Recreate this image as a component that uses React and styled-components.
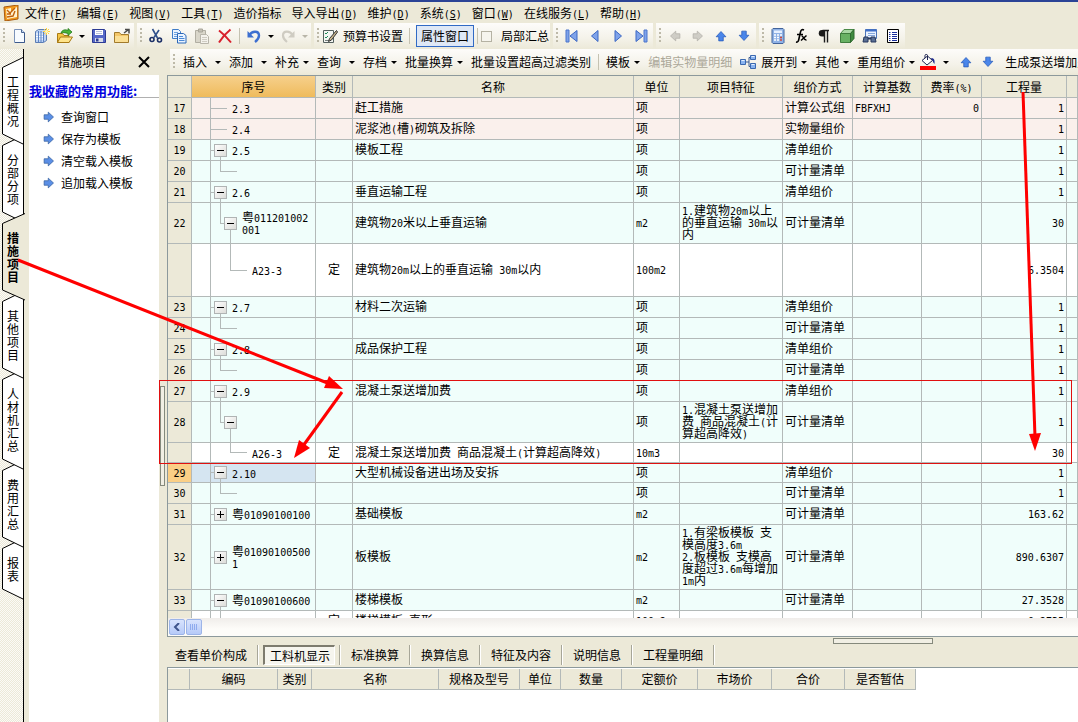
import React from "react";
import styled, { createGlobalStyle, css } from "styled-components";

const FACE = "#ece9d8";
const LINE = "#b3b9b8";
const FRAME = "#8c999c";

const GlobalStyle = createGlobalStyle`
  * {
    box-sizing: border-box;
  }

  body {
    margin: 0;
    overflow: hidden;
    background: ${FACE};
    color: #000;
    font: 12px/12px "Noto Sans CJK SC", sans-serif;
  }

  button,
  input {
    margin: 0;
    padding: 0;
    border: 0;
    background: none;
    color: inherit;
    font: inherit;
  }
`;

const Latin = styled.span`
  font-family: "DejaVu Sans Mono", monospace;
  font-size: 10px;
  line-height: 0;
`;

// latin runs take half of a Han character's width
const Txt = ({ children }) => (
  <span>
    {children
      .split(/([\x20-\x7e]+)/)
      .map((part, i) => (i % 2 ? <Latin key={i}>{part}</Latin> : part))}
  </span>
);

/* ---------- icons ---------- */

const Svg = styled.svg`
  display: block;
  flex: none;
`;

const Icon = ({ children }) => (
  <Svg width="16" height="16" viewBox="0 0 16 16" fill="none" aria-hidden="true">
    {children}
  </Svg>
);

const arrowPath = "M1.5 5H7V1.5L14 8l-7 6.5V11H1.5z";

const BlockArrow = ({ turn = 0, fill = "#4a86ea", stroke = "#2458b8" }) => (
  <Icon>
    <path
      d={arrowPath}
      fill={fill}
      stroke={stroke}
      transform={`rotate(${turn} 8 8) translate(2 2) scale(.75)`}
    />
  </Icon>
);

const icons = {
  app: (
    <Svg width="16" height="16" viewBox="0 0 16 16" aria-hidden="true">
      <path d="M1 2l14-2v14L2 16z" fill="#f39a1d" stroke="#a85a10" />
      <path d="M3 4l5-1v4l4-4 2-1v10L4 14z" fill="#fff3d2" />
      <path d="M4 5l3 3 5-5M4 9h4M4 12l6-1 2-5" stroke="#c2620b" strokeWidth="1.4" fill="none" />
    </Svg>
  ),
  page: (
    <Icon>
      <path d="M3.5 1.5h7l3 3v10h-10z" fill="#f7fbff" stroke="#7a92b8" />
      <path d="M10.5 1.5v3h3" fill="#c9dbf5" stroke="#4a6592" />
      <path d="M13.5 5v9.5H4" stroke="#3c5a8c" />
    </Icon>
  ),
  newGrid: (
    <Icon>
      <path d="M1.5 3.5l3-2h8v11l-3 2h-8z" fill="#bcd3f4" stroke="#5b7db4" />
      <path d="M2 6h8M2 8.5h8M2 11h8" stroke="#fff" />
      <path d="M4.5 3v11M7 3v11M9.5 3v11" stroke="#5b82c4" />
      <path d="M12.5 0v7M9 3.5h7M10 1l5 5M15 1l-5 5" stroke="#ffd23c" />
      <circle cx="12.5" cy="3.5" r="1.5" fill="#fff6b8" />
    </Icon>
  ),
  open: (
    <Icon>
      <path d="M.5 14.5v-9h5l1.5 2h5v7z" fill="#f6c544" stroke="#a87a14" />
      <path d="M.5 14.5l3-5.5h12l-3.5 5.5z" fill="#ffe48a" stroke="#a87a14" />
      <path d="M4 5c1-3 4-4 7-2.5V.5L15 4l-4 3.5V5.5C8 4.500 6 4.500 4 5z" fill="#4bb43a" stroke="#247a1a" strokeWidth=".8" />
    </Icon>
  ),
  save: (
    <Icon>
      <path d="M1.5 1.5h12l1 1v12h-13z" fill="#5668c8" stroke="#2c3a94" />
      <path d="M4 2h8v5H4z" fill="#fff" />
      <path d="M5 3.5h6M5 5.5h6" stroke="#b9c0dc" />
      <path d="M4 10h8v4H4z" fill="#d7dbe8" />
      <path d="M5 10.5h2.5v3H5z" fill="#2c3a94" />
    </Icon>
  ),
  folder: (
    <Icon>
      <path d="M.5 14.5V4.5h5l1.5 2h7.5v8z" fill="#f5c768" stroke="#a17a2c" />
      <path d="M1 14V8h13v6z" fill="#fbdf94" />
      <path d="M10 5l4-3M11 1.5h4v4" stroke="#4a4a4a" strokeWidth="1.5" />
    </Icon>
  ),
  cut: (
    <Icon>
      <path d="M4.5 1l5 9M11 2L6 9.5" stroke="#2f4f8a" strokeWidth="1.6" />
      <circle cx="4" cy="11.5" r="2" stroke="#1b2f66" strokeWidth="1.6" />
      <circle cx="11.5" cy="12" r="2" stroke="#1b2f66" strokeWidth="1.6" />
    </Icon>
  ),
  copy: (
    <Icon>
      <path d="M1.5 1.5h6l2 2v7h-8z" fill="#eaf3ff" stroke="#3f7cc8" />
      <path d="M3 4.5h4M3 6.5h5M3 8.5h5" stroke="#6ea2e0" />
      <path d="M6.5 5.5h6l2.5 2v7.500H6.500z" fill="#eaf3ff" stroke="#2b68b8" />
      <path d="M8 8.5h4M8 10.5h5.5M8 12.5h5.5" stroke="#4c8ad6" />
    </Icon>
  ),
  paste: (
    <Icon>
      <path d="M1.5 2.5h10v12h-10z" fill="#d9d6ca" stroke="#b1aea2" />
      <path d="M4.5 1h4v3h-4z" fill="#c4c1b6" stroke="#a9a69b" />
      <path d="M6.5 6.5h6l2 2v7h-8z" fill="#f4f2ec" stroke="#b8b5aa" />
      <path d="M8 9.5h5M8 11.5h5M8 13.5h5" stroke="#cfccc2" />
    </Icon>
  ),
  remove: (
    <Icon>
      <path d="M2 2.5c4 3 8 7 12 12M13.5 1.5C9 5 5 9.500 2 14.500" stroke="#d8202c" strokeWidth="2" />
    </Icon>
  ),
  undo: (
    <Icon>
      <path d="M3.5 7C6 2.500 13 2.500 13 7.500c0 2.500-1.500 4.500-4 6.500" stroke="#3d6fd0" strokeWidth="2.4" />
      <path d="M1.5 3v6.5H8z" fill="#3d6fd0" />
    </Icon>
  ),
  redo: (
    <Icon>
      <path d="M12.5 7C10 2.500 3 2.500 3 7.500c0 2.500 1.500 4.500 4 6.500" stroke="#cfccc2" strokeWidth="2.2" />
      <path d="M14.5 3v6.5H8z" fill="#cfccc2" />
    </Icon>
  ),
  edit: (
    <Icon>
      <path d="M1.5 2.5h10v12h-10z" fill="#f4f6f2" stroke="#55605e" />
      <path d="M3 5l1 1 2-2M3 9l1 1 2-2" stroke="#1f8a5a" />
      <path d="M3 12.5h6" stroke="#77807e" />
      <path d="M14.5 2.5l-7 8-1 3 3-1.500 6-8z" fill="#c8b48a" stroke="#333" />
    </Icon>
  ),
  first: (
    <Icon>
      <path d="M2 2h3v12H2z" fill="#7fa3ea" stroke="#4a74cc" />
      <path d="M13 2.5v11L6 8z" fill="#7fa3ea" stroke="#3c68c4" />
    </Icon>
  ),
  prev: (
    <Icon>
      <path d="M11 2.5v11L4.5 8z" fill="#7fa3ea" stroke="#3c68c4" />
    </Icon>
  ),
  next: (
    <Icon>
      <path d="M5 2.5v11L11.5 8z" fill="#7fa3ea" stroke="#3c68c4" />
    </Icon>
  ),
  last: (
    <Icon>
      <path d="M11 2h3v12h-3z" fill="#7fa3ea" stroke="#4a74cc" />
      <path d="M3 2.5v11L10 8z" fill="#7fa3ea" stroke="#3c68c4" />
    </Icon>
  ),
  leftOff: <BlockArrow turn={180} fill="#cfcdc6" stroke="#b1afa8" />,
  rightOff: <BlockArrow fill="#cfcdc6" stroke="#b1afa8" />,
  up: <BlockArrow turn={-90} />,
  down: <BlockArrow turn={90} />,
  right: <BlockArrow fill="#5b8fe6" stroke="#35609f" />,
  calc: (
    <Icon>
      <path d="M3 .5h10l1 1v13l-1 1H3l-1-1v-13z" fill="#8fb2e6" stroke="#42649c" />
      <path d="M4 2.5h8V5H4z" fill="#e6f0ff" />
      <path d="M4 7h2M7 7h2M10 7h2M4 9.5h2M7 9.5h2M4 12h2M7 12h2" stroke="#fff" strokeWidth="1.4" />
      <path d="M10 9.5h2M10 12h2" stroke="#d24a3a" strokeWidth="1.4" />
    </Icon>
  ),
  fx: (
    <Icon>
      <path d="M3 14c2 .5 2.500-1 3-3.500L7.500 4c.5-2 1.500-3 3.500-2M4 6.500h6" stroke="#000" strokeWidth="1.6" />
      <path d="M8.5 8c2-.5 2 4.500 5 4M13.500 7.500L8 12.500" stroke="#000" strokeWidth="1.5" />
    </Icon>
  ),
  pilcrow: (
    <Icon>
      <path d="M13 2.5H6.5M8.5 2.5v12M11.5 2.5v12" stroke="#1a1a1a" strokeWidth="1.4" />
      <path d="M8.5 2H6a3 3 0 000 6.500h2.500z" fill="#1a1a1a" />
    </Icon>
  ),
  cube: (
    <Icon>
      <path d="M1.5 5.5l3.5-4h10l-3.500 4z" fill="#a9d8a4" stroke="#4a8a48" />
      <path d="M1.5 5.5h10v9h-10z" fill="#68b163" stroke="#3f7d3d" />
      <path d="M11.5 5.5l3.5-4v9l-3.500 4z" fill="#3f8a3f" stroke="#2f6a2f" />
    </Icon>
  ),
  find: (
    <Icon>
      <path d="M3.5 1.5h11v9h-11z" fill="#eaf2ff" stroke="#4c74b8" />
      <path d="M3.5 2.5h11" stroke="#3f6fc8" strokeWidth="2" />
      <path d="M6 5.5h7M6 7.5h7" stroke="#86a8dc" />
      <path d="M2 9h4v5H1zM9 9h4l1 5H9z" fill="#5a6f94" stroke="#26395e" />
      <path d="M6 10.5h3" stroke="#26395e" strokeWidth="2" />
    </Icon>
  ),
  list: (
    <Icon>
      <path d="M2.5 1.5h11v13h-11z" fill="#fff" stroke="#000" />
      <path d="M4 4.5h1.5M7 4.5h5M4 6.5h1.5M7 6.5h5M4 8.5h1.5M7 8.5h5M4 10.5h1.5M7 10.5h5M4 12.5h1.5M7 12.5h5" stroke="#1b2f9c" />
    </Icon>
  ),
  expand: (
    <Icon>
      <path d="M6 8h3M9 3.5v9M9 3.5h2M9 12.5h2" stroke="#3a5a90" />
      <path d="M.5 5.5h5v5h-5z" fill="#8ab4f0" stroke="#3a68b0" />
      <path d="M10.5 1.5h5v4h-5zM10.5 9.5h5v5h-5z" fill="#8ab4f0" stroke="#3a68b0" />
      <path d="M1.5 6.5h3M11.5 2.5h3M11.5 10.5h3" stroke="#e4efff" />
    </Icon>
  ),
  bucket: (
    <Icon>
      <path d="M2 6.5L7.5 2l5 4.500L7 11z" fill="#fff" stroke="#1c2350" />
      <path d="M7.5 6V1.500c0-1.500-2.500-1.500-2.500 0V4" stroke="#1c2350" />
      <path d="M11 4c3 0 4 2 3.500 6-1.500-1-1.500-3-2-3.500z" fill="#1c2a90" />
      <path d="M0 12h16v4H0z" fill="#f00" />
    </Icon>
  ),
  close: (
    <Svg width="12" height="12" viewBox="0 0 12 12" aria-hidden="true">
      <path d="M1 1l10 10M11 1L1 11" stroke="#000" strokeWidth="2" />
    </Svg>
  )
};

/* ---------- menu and toolbars ---------- */

const Page = styled.div`
  position: relative;
  display: flex;
  flex-direction: column;
  height: 100vh;
  border-top: 2px solid #2b4396;
  overflow: hidden;
  white-space: nowrap;
`;

const MenuBar = styled.nav`
  display: flex;
  align-items: center;
  flex: none;
  gap: 10px;
  height: 21px;
  padding-left: 3px;

  ${Svg} {
    margin-right: -4px;
  }
`;

const BarRow = styled.div`
  display: flex;
  flex: none;
  gap: 3px;
  height: 26px;
`;

const Bar = styled.div`
  display: flex;
  align-items: center;
  gap: 1px;
  padding-right: 1px;
  background: linear-gradient(#fdfcfa, #f4f2e9 60%, ${FACE});
`;

const WideBar = styled(Bar)`
  flex: none;
  gap: 0;
  height: 26px;
  margin-left: 3px;
  overflow: hidden;
`;

const Grip = styled.i`
  flex: none;
  width: 2px;
  height: 16px;
  margin: 0 2px 0 3px;
  background: repeating-linear-gradient(#bdb9a8 0 2px, transparent 2px 4px);
`;

const Divider = styled.i`
  flex: none;
  width: 1px;
  height: 16px;
  margin: 0 ${p => p.$space ?? 2}px;
  background: #c5c2b2;
`;

const Gap = styled.span`
  flex: none;
  width: ${p => p.$size}px;
`;

const IconButton = styled.button`
  display: flex;
  flex: none;
  justify-content: center;
  width: 22px;
`;

const DropButton = styled.button`
  flex: none;
  width: ${p => (p.$slim ? 8 : 10)}px;
  height: 16px;
  margin-left: ${p => p.$before || 0}px;
  margin-right: ${p => p.$after || 0}px;
  color: ${p => (p.disabled ? "#b8b5a8" : "#000")};

  &::after {
    content: "";
    display: block;
    width: 0;
    margin: 0 auto;
    border: 3px solid transparent;
    border-top-color: currentColor;
    border-bottom: 0;
  }
`;

const TextButton = styled.button`
  display: flex;
  flex: none;
  align-items: center;
  gap: 5px;
  color: ${p => (p.disabled ? "#aca899" : "#000")};
`;

const ToggleButton = styled(TextButton)`
  height: 22px;
  padding: 0 4px;
  border: 1px solid #316ac5;
  background: #dfe8f6;
`;

const CheckLabel = styled.label`
  display: flex;
  align-items: center;
  gap: 9px;
`;

const CheckBox = styled.input`
  width: 11px;
  height: 11px;
  border: 1px solid #b5b2a3;
  background: #f6f5ee;
  appearance: none;
`;

const menus = [
  ["文件", "F"],
  ["编辑", "E"],
  ["视图", "V"],
  ["工具", "T"],
  ["造价指标"],
  ["导入导出", "D"],
  ["维护", "D"],
  ["系统", "S"],
  ["窗口", "W"],
  ["在线服务", "L"],
  ["帮助", "H"]
];

const Tool = ({ icon, label }) => (
  <IconButton type="button" aria-label={label}>
    {icons[icon]}
  </IconButton>
);

const MainToolbar = () => (
  <BarRow>
    <Bar>
      <Grip />
      <Tool icon="page" label="新建" />
      <Tool icon="newGrid" label="新建工程" />
      <Tool icon="open" label="打开" />
      <DropButton aria-label="最近文件" />
      <Tool icon="save" label="保存" />
      <Tool icon="folder" label="目录" />
    </Bar>
    <Bar>
      <Grip />
      <Tool icon="cut" label="剪切" />
      <Tool icon="copy" label="复制" />
      <Tool icon="paste" label="粘贴" />
      <Tool icon="remove" label="删除" />
      <Divider />
      <Tool icon="undo" label="撤销" />
      <DropButton aria-label="撤销列表" />
      <Tool icon="redo" label="恢复" />
      <DropButton aria-label="恢复列表" disabled />
    </Bar>
    <Bar>
      <Grip />
      <TextButton type="button">
        {icons.edit}
        预算书设置
      </TextButton>
      <Divider $space={5} />
      <ToggleButton type="button" aria-pressed="true">
        属性窗口
      </ToggleButton>
      <Divider />
      <CheckLabel>
        <CheckBox type="checkbox" />
        局部汇总
      </CheckLabel>
    </Bar>
    <Bar>
      <Grip />
      <Tool icon="first" label="首行" />
      <Tool icon="prev" label="上一行" />
      <Tool icon="next" label="下一行" />
      <Tool icon="last" label="末行" />
    </Bar>
    <Bar>
      <Grip />
      <Tool icon="leftOff" label="升级" />
      <Tool icon="rightOff" label="降级" />
      <Tool icon="up" label="上移" />
      <Tool icon="down" label="下移" />
    </Bar>
    <Bar>
      <Grip />
      <Tool icon="calc" label="计算器" />
      <Tool icon="fx" label="函数" />
      <Tool icon="pilcrow" label="特殊符号" />
      <Tool icon="cube" label="图元公式" />
      <Tool icon="find" label="查找" />
      <Tool icon="list" label="清单" />
    </Bar>
  </BarRow>
);

const DropText = ({ children, icon, roomy, after = 7 }) => (
  <>
    <TextButton type="button">
      {icon && icons[icon]}
      {children}
    </TextButton>
    <DropButton $slim $before={roomy ? 7 : 3} $after={after} aria-label={`${children}选项`} />
  </>
);

const EditToolbar = () => (
  <WideBar>
    <Grip />
    <Gap $size={6} />
    <DropText roomy>插入</DropText>
    <DropText roomy>添加</DropText>
    <DropText>补充</DropText>
    <DropText roomy>查询</DropText>
    <DropText>存档</DropText>
    <DropText>批量换算</DropText>
    <TextButton type="button">批量设置超高过滤类别</TextButton>
    <Divider $space={7} />
    <DropText>模板</DropText>
    <TextButton type="button" disabled>
      编辑实物量明细
    </TextButton>
    <Gap $size={8} />
    <DropText icon="expand">展开到</DropText>
    <DropText>其他</DropText>
    <DropText after={1}>重用组价</DropText>
    <Tool icon="bucket" label="填充颜色" />
    <DropButton $slim $before={3} $after={5} aria-label="颜色" />
    <Tool icon="up" label="上移" />
    <Tool icon="down" label="下移" />
    <Gap $size={6} />
    <TextButton type="button">生成泵送增加费</TextButton>
  </WideBar>
);

/* ---------- left side ---------- */

const Body = styled.div`
  display: flex;
  flex: 1;
  min-height: 0;
`;

const TabStrip = styled.div`
  display: flex;
  flex: none;
  flex-direction: column;
  width: 24px;
  padding-top: 8px;
  border-right: 1px solid #000;
  background: repeating-conic-gradient(#fbfaf7 0 25%, ${FACE} 0 50%) 0 0 / 2px 2px;
`;

const SideTab = styled.button`
  position: relative;
  z-index: ${p => (p.$active ? 20 : p.$order)};
  display: block;
  flex: none;
  width: 24px;
  height: ${p => p.$height}px;
  margin-bottom: -10px;
  padding: 0 6px 0 7px;
  line-height: 13px;
  font-weight: ${p => (p.$active ? 700 : 400)};
  white-space: normal;

  ${Svg} {
    position: absolute;
    inset: 0 auto auto 0;
    z-index: -1;
  }
`;

const sideTabs = ["工程概况", "分部分项", "措施项目", "其他项目", "人材机汇总", "费用汇总", "报表"];

const SideTabs = () => (
  <TabStrip role="tablist">
    {sideTabs.map((name, i) => {
      const active = name === "措施项目";
      const height = name.length * 13 + 36;
      const right = active ? 25 : 23;
      return (
        <SideTab
          key={name}
          type="button"
          role="tab"
          aria-selected={active}
          $active={active}
          $order={sideTabs.length - i}
          $height={height}
        >
          <Svg width="25" height={height} aria-hidden="true">
            <path
              d={`M${right} .5L2.5 10.5V${height - 11}L${right} ${height - 1}`}
              fill={active ? FACE : "#fff"}
              stroke="#000"
            />
          </Svg>
          {name}
        </SideTab>
      );
    })}
  </TabStrip>
);

const SidePanel = styled.aside`
  display: flex;
  flex: none;
  flex-direction: column;
  width: 135px;
  padding-left: 5px;
`;

const SideHead = styled.header`
  display: flex;
  align-items: center;
  justify-content: space-between;
  height: 26px;
  padding: 0 9px 0 29px;
`;

const SideBody = styled.div`
  flex: 1;
  background: #fff;
`;

const SideTitle = styled.h2`
  height: 23px;
  margin: 0;
  padding-top: 9px;
  border-bottom: 1px solid #b0b0b0;
  color: #0000e0;
  font-size: 13px;
  line-height: 13px;
`;

const SideLink = styled.a`
  display: flex;
  align-items: center;
  gap: 4px;
  height: 22px;
  padding-left: 12px;
  color: #000;
  text-decoration: none;
`;

const SideLinks = styled.nav`
  padding-top: 8px;
`;

const Splitter = styled.div`
  flex: none;
  width: 8px;
  padding: 337px 2px 0 1px;
`;

const Handle = styled.div`
  width: ${p => (p.$wide ? "100px" : "100%")};
  height: ${p => (p.$wide ? 6 : 100)}px;
  border: 1px solid #85897c;
  background: #f1efe4;
`;

/* ---------- grid ---------- */

const Main = styled.main`
  display: flex;
  flex: 1;
  flex-direction: column;
  min-width: 0;
`;

const GridFrame = styled.section`
  display: flex;
  flex: 1;
  flex-direction: column;
  min-height: 0;
  border: 1px solid ${FRAME};
  border-right: 0;
  background: #fff;
`;

const GridView = styled.div`
  flex: 1;
  min-height: 0;
  overflow: hidden;
`;

const Table = styled.table`
  width: ${p => (p.$fit ? "748px" : "100%")};
  border-spacing: 0;
  table-layout: fixed;

  th {
    height: ${p => (p.$fit ? 21 : 22)}px;
    padding: 0;
    border: solid ${LINE};
    border-width: 0 1px 1px 0;
    background: ${FACE};
    font-weight: 400;
  }
`;

const KeyHead = styled.th`
  && {
    background: linear-gradient(#f6d08c, #efbb5c);
  }
`;

const tones = { pink: "#faf0ec", mint: "#f0fefb", white: "#fff" };

const Row = styled.tr`
  height: ${p => p.$height}px;
  background: ${p => tones[p.$tone]};
`;

const Cell = styled.td`
  padding: 0 2px 2px;
  border: solid ${LINE};
  border-width: 0 1px 1px 0;
  text-align: ${p => p.$align || "left"};
  white-space: pre;
  overflow: hidden;
  background: ${p => (p.$selected ? "#d5e5f1" : "transparent")};
`;

const RowHead = styled.th`
  && {
    height: auto;
    padding-bottom: 2px;
    background: ${p => (p.$selected ? "#fbcf86" : FACE)};
  }
`;

const stroke = `linear-gradient(${LINE}, ${LINE})`;

// position and size of every connector piece
const branches = {
  leaf: [["0 50%", "16px 1px"]],
  closed: [["0 50%", "3px 1px"]],
  node: [["0 50%", "3px 1px"], ["9px 100%", "1px 50%"]],
  subleaf: [["9px 0", "1px 50%"], ["9px 50%", "17px 1px"]],
  subnode: [["9px 0", "1px 50%"], ["9px 50%", "4px 1px"], ["19px 100%", "1px 50%"]],
  deepleaf: [["19px 0", "1px 50%"], ["19px 50%", "17px 1px"]]
};

const indents = { leaf: 21, closed: 3, node: 3, subleaf: 32, subnode: 13, deepleaf: 41 };

const TreeCell = styled(Cell)`
  padding: 0 0 0 ${p => indents[p.$kind]}px;
  ${p => css`
    background: ${branches[p.$kind]
      .map(([pos, size]) => `${stroke} ${pos} / ${size} no-repeat`)
      .join(", ")}${p.$selected ? ", #d5e5f1" : ""};
  `}
`;

const TreeLine = styled.div`
  display: flex;
  align-items: center;
  gap: 5px;
`;

const Toggle = styled.button`
  flex: none;
  width: 13px;
  height: 13px;
  border: 1px solid #b0b4b4;
  background: ${p => (p.$closed ? "linear-gradient(#000, #000) 5px 2px / 1px 7px no-repeat," : "")}
    linear-gradient(#000, #000) 2px 5px / 7px 1px no-repeat,
    linear-gradient(135deg, #fff, #dcdcd8);
`;

const rows = [
  { no: "17", kind: "leaf", code: "2.3", name: "赶工措施", unit: "项", mode: "计算公式组", base: "FBFXHJ", rate: "0", qty: "1", tone: "pink" },
  { no: "18", kind: "leaf", code: "2.4", name: "泥浆池(槽)砌筑及拆除", unit: "项", mode: "实物量组价", qty: "1", tone: "pink" },
  { no: "19", kind: "node", code: "2.5", name: "模板工程", unit: "项", mode: "清单组价", qty: "1" },
  { no: "20", kind: "subleaf", unit: "项", mode: "可计量清单", qty: "1" },
  { no: "21", kind: "node", code: "2.6", name: "垂直运输工程", unit: "项", mode: "清单组价", qty: "1" },
  { no: "22", kind: "subnode", code: "粤011201002\n001", name: "建筑物20米以上垂直运输", unit: "m2", feature: "1.建筑物20m以上\n的垂直运输 30m以\n内", mode: "可计量清单", qty: "30", height: 41 },
  { kind: "deepleaf", code: "A23-3", type: "定", name: "建筑物20m以上的垂直运输 30m以内", unit: "100m2", qty: "6.3504", height: 53, tone: "white" },
  { no: "23", kind: "node", code: "2.7", name: "材料二次运输", unit: "项", mode: "清单组价", qty: "1" },
  { no: "24", kind: "subleaf", unit: "项", mode: "可计量清单", qty: "1" },
  { no: "25", kind: "node", code: "2.8", name: "成品保护工程", unit: "项", mode: "清单组价", qty: "1" },
  { no: "26", kind: "subleaf", unit: "项", mode: "可计量清单", qty: "1" },
  { no: "27", kind: "node", code: "2.9", name: "混凝土泵送增加费", unit: "项", mode: "清单组价", qty: "1" },
  { no: "28", kind: "subnode", unit: "项", feature: "1.混凝土泵送增加\n费 商品混凝土(计\n算超高降效)", mode: "可计量清单", qty: "1", height: 41 },
  { kind: "deepleaf", code: "A26-3", type: "定", name: "混凝土泵送增加费 商品混凝土(计算超高降效)", unit: "10m3", qty: "30", height: 20, tone: "white" },
  { no: "29", kind: "node", code: "2.10", name: "大型机械设备进出场及安拆", unit: "项", mode: "清单组价", qty: "1", height: 20, selected: true },
  { no: "30", kind: "subleaf", unit: "项", mode: "可计量清单", qty: "1" },
  { no: "31", kind: "closed", code: "粤01090100100", name: "基础模板", unit: "m2", mode: "可计量清单", qty: "163.62" },
  { no: "32", kind: "closed", code: "粤01090100500\n1", name: "板模板", unit: "m2", feature: "1.有梁板模板 支\n模高度3.6m\n2.板模板 支模高\n度超过3.6m每增加\n1m内", mode: "可计量清单", qty: "890.6307", height: 65 },
  { no: "33", kind: "node", code: "粤01090100600", name: "楼梯模板", unit: "m2", mode: "可计量清单", qty: "27.3528" },
  { kind: "subleaf", code: "A21-28", type: "定", name: "楼梯模板 直形", unit: "100m2", qty: "0.2735", tone: "white" }
];

const GridRow = ({ row }) => {
  const { kind, selected } = row;
  const hasToggle = ["node", "closed", "subnode"].includes(kind);
  return (
    <Row $height={row.height || 21} $tone={row.tone || "mint"}>
      <RowHead $selected={selected} scope="row">
        <Txt>{row.no || ""}</Txt>
      </RowHead>
      <Cell $selected={selected} />
      <TreeCell $kind={kind} $selected={selected}>
        <TreeLine>
          {hasToggle && (
            <Toggle
              type="button"
              $closed={kind === "closed"}
              aria-label={kind === "closed" ? "展开" : "折叠"}
            />
          )}
          <Txt>{row.code || ""}</Txt>
        </TreeLine>
      </TreeCell>
      <Cell $align="center">{row.type}</Cell>
      <Cell><Txt>{row.name || ""}</Txt></Cell>
      <Cell><Txt>{row.unit}</Txt></Cell>
      <Cell><Txt>{row.feature || ""}</Txt></Cell>
      <Cell>{row.mode}</Cell>
      <Cell><Txt>{row.base || ""}</Txt></Cell>
      <Cell $align="right"><Txt>{row.rate || ""}</Txt></Cell>
      <Cell $align="right"><Txt>{row.qty}</Txt></Cell>
      <Cell />
    </Row>
  );
};

const Col = styled.col`
  width: ${p => (p.$w ? `${p.$w}px` : "auto")};
`;

const gridCols = [24, 19, 105, 37, null, 46, 103, 70, 69, 60, 85, 11];
const gridHeads = ["类别", "名称", "单位", "项目特征", "组价方式", "计算基数", "费率(%)", "工程量", ""];

const Grid = () => (
  <Table>
    <colgroup>
      {gridCols.map((w, i) => <Col key={i} $w={w} />)}
    </colgroup>
    <thead>
      <tr>
        <th />
        <KeyHead colSpan={2}>序号</KeyHead>
        {gridHeads.map(head => (
          <th key={head}><Txt>{head}</Txt></th>
        ))}
      </tr>
    </thead>
    <tbody>
      {rows.map((row, i) => <GridRow key={i} row={row} />)}
    </tbody>
  </Table>
);

const ScrollBar = styled.div`
  display: flex;
  flex: none;
  gap: 1px;
  height: 18px;
  padding: 1px;
  background: linear-gradient(#f0edea, #fdfcf9 60%);
`;

const ScrollButton = styled.button`
  display: grid;
  place-items: center;
  width: 16px;
  height: 16px;
  border: 1px solid #9cb4e8;
  border-radius: 2px;
  background: linear-gradient(#d8e3fd, #b6caf8);
`;

/* ---------- detail pane ---------- */

const HSplitter = styled.div`
  display: flex;
  flex: none;
  justify-content: flex-end;
  height: 7px;
  padding: 1px 145px 0 0;
`;

const DetailTabs = styled.div`
  display: flex;
  flex: none;
  height: 23px;
  padding: 1px 0 2px;
  margin-left: -2px;
`;

const DetailTab = styled.button`
  margin-right: 1px;
  padding: 0 ${p => (p.$active ? 4 : 10)}px;
  border-right: 1px solid #a7a698;
  box-shadow: 1px 0 #fff;
`;

const Pressed = styled.span`
  display: block;
  padding: 3px 4px 2px 5px;
  border: 1px solid #fff;
  border-top: 2px solid #7d7b6e;
  border-left: 2px solid #7d7b6e;
  background: #f6f5ee;
`;

const DetailPane = styled.section`
  flex: none;
  height: 55px;
  padding-top: 1px;
  border: solid ${FRAME};
  border-width: 1px 0 0 1px;
  background: #fff;
`;

const detailTabs = ["查看单价构成", "工料机显示", "标准换算", "换算信息", "特征及内容", "说明信息", "工程量明细"];

const detailCols = [
  ["", 22],
  ["编码", 88],
  ["类别", 34],
  ["名称", 127],
  ["规格及型号", 81],
  ["单位", 41],
  ["数量", 61],
  ["定额价", 76],
  ["市场价", 74],
  ["合价", 73],
  ["是否暂估", 71]
];

/* ---------- red marks ---------- */

const Marks = styled.svg`
  position: absolute;
  top: -2px;
  left: 0;
  z-index: 30;
  pointer-events: none;
`;

const RedMarks = () => (
  <Marks width="1078" height="722" fill="none" aria-hidden="true">
    <rect x="159.5" y="380.5" width="912" height="83" stroke="#e01010" />
    <g stroke="#f00" strokeWidth="3">
      <path d="M18 260L330 384" />
      <path d="M342 392L303 446" />
      <path d="M1023 92L1035 437" />
    </g>
    <g fill="#f00">
      <path d="M343 389L324 388L329 376z" />
      <path d="M294 458L299 440L310 448z" />
      <path d="M1035 451L1029 434L1041 433z" />
    </g>
  </Marks>
);

const App = () => (
  <Page>
    <GlobalStyle />
    <MenuBar>
      {icons.app}
      {menus.map(([name, key]) => (
        <button key={name} type="button">
          {name}
          {key && (
            <Latin>
              (<u>{key}</u>)
            </Latin>
          )}
        </button>
      ))}
    </MenuBar>
    <MainToolbar />
    <Body>
      <SideTabs />
      <SidePanel>
        <SideHead>
          措施项目
          <button type="button" aria-label="关闭">
            {icons.close}
          </button>
        </SideHead>
        <SideBody>
          <SideTitle>我收藏的常用功能:</SideTitle>
          <SideLinks>
            {["查询窗口", "保存为模板", "清空载入模板", "追加载入模板"].map(name => (
              <SideLink key={name} href="#">
                {icons.right}
                {name}
              </SideLink>
            ))}
          </SideLinks>
        </SideBody>
      </SidePanel>
      <Splitter>
        <Handle />
      </Splitter>
      <Main>
        <EditToolbar />
        <GridFrame>
          <GridView>
            <Grid />
          </GridView>
          <ScrollBar>
            <ScrollButton type="button" aria-label="向左滚动">
              <Svg width="8" height="8" viewBox="0 0 8 8" aria-hidden="true">
                <path d="M6 0L2 4l4 4" fill="none" stroke="#40568c" strokeWidth="2" />
              </Svg>
            </ScrollButton>
            <ScrollButton type="button" aria-label="滚动块">
              <Svg width="8" height="6" viewBox="0 0 8 6" aria-hidden="true">
                <path d="M.5 0v6M2.5 0v6M4.5 0v6M6.5 0v6" stroke="#8fabee" />
              </Svg>
            </ScrollButton>
          </ScrollBar>
        </GridFrame>
        <HSplitter>
          <Handle $wide />
        </HSplitter>
        <DetailTabs role="tablist">
          {detailTabs.map(name => {
            const active = name === "工料机显示";
            return (
              <DetailTab key={name} type="button" role="tab" aria-selected={active} $active={active}>
                {active ? <Pressed>{name}</Pressed> : name}
              </DetailTab>
            );
          })}
        </DetailTabs>
        <DetailPane>
          <Table $fit>
            <colgroup>
              {detailCols.map(([name, w]) => <Col key={name} $w={w} />)}
            </colgroup>
            <thead>
              <tr>
                {detailCols.map(([name]) => <th key={name}>{name}</th>)}
              </tr>
            </thead>
          </Table>
        </DetailPane>
      </Main>
    </Body>
    <RedMarks />
  </Page>
);

export default App;
